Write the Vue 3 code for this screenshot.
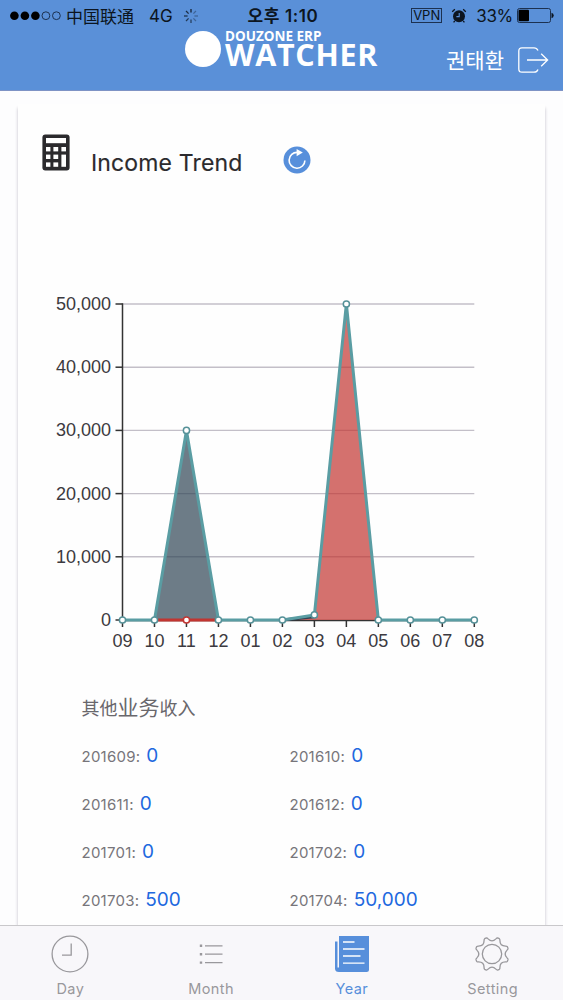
<template>
  <div class="page">
    <header class="header">
      <div class="status">
        <div class="status-left">
          <svg class="signal" width="51" height="12" viewBox="0 0 51 12">
            <circle
              v-for="n in 5"
              :key="n"
              :cx="4.4 + (n - 1) * 10.5"
              cy="5.7"
              :r="n <= 3 ? 4.3 : 3.9"
              :class="n <= 3 ? 'dot' : 'dot-empty'"
            />
          </svg>
          <span class="carrier">中国联通</span>
          <span class="network">4G</span>
          <svg class="loader" width="16" height="16" viewBox="-8 -8 16 16">
            <line
              v-for="n in 8"
              :key="n"
              x1="0"
              y1="-3.4"
              x2="0"
              y2="-7"
              :transform="`rotate(${n * 45})`"
              :opacity="n < 4 ? 0.35 : 0.4 + n * 0.06"
            />
          </svg>
        </div>
        <span class="time">오후 1:10</span>
        <div class="status-right">
          <span class="vpn">VPN</span>
          <svg class="alarm" width="16" height="16" viewBox="0 0 16 16">
            <circle cx="8" cy="8.2" r="6" fill="#0c1520" />
            <path d="M1.4 4Q2 2.200 4 1.400M14.600 4Q14 2.200 12 1.400M3.800 12.800l-1.200 1.600M12.200 12.800l1.200 1.600" stroke="#0c1520" stroke-width="1.300" fill="none" />
            <path d="M8.200 5v3.600H5.400" stroke="#5a90d8" stroke-width="1.100" fill="none" />
          </svg>
          <span class="percent">33%</span>
          <svg class="battery" width="37" height="15" viewBox="0 0 37 15">
            <rect x="0.5" y="0.5" width="33" height="14" rx="2" fill="none" stroke="#1c3150" />
            <rect x="1.5" y="1.8" width="10.5" height="11.4" rx="1" fill="#000" />
            <path d="M34.5 4.8q2.2.6 2.2 2.700t-2.200 2.700z" fill="#0c1520" />
          </svg>
        </div>
      </div>
      <div class="nav">
        <div class="logo">
          <span class="logo-mark"></span>
          <div class="logo-text">
            <span class="logo-small">DOUZONE ERP</span>
            <span class="logo-big">WATCHER</span>
          </div>
        </div>
        <div class="user">
          <span class="user-name">권태환</span>
          <svg width="31" height="26" viewBox="0 0 31 26" class="logout">
            <path d="M20 3.600Q18.800.8 16 .8H4Q.8.8.8 4v18Q.8 25.200 4 25.200h12q2.800 0 4-2.800" />
            <path d="M9 13h20.500M23.200 6.800L29.600 13l-6.400 6.200" />
          </svg>
        </div>
      </div>
    </header>

    <main class="content">
      <section class="card">
        <div class="title">
          <svg class="calc" width="28" height="37" viewBox="0 0 28 37">
            <rect x="0.400" y="0.500" width="27.200" height="36" rx="3" fill="#2b2a2d" />
            <g fill="#fff">
              <rect x="4" y="4" width="20" height="5.200" />
              <rect x="4" y="13" width="4.400" height="4.400" />
              <rect x="11.400" y="13" width="4.800" height="4.400" />
              <rect x="19.400" y="13" width="4.600" height="4.400" />
              <rect x="4" y="20.600" width="4.400" height="4.400" />
              <rect x="11.400" y="20.600" width="4.800" height="4.400" />
              <rect x="4" y="28.400" width="4.400" height="4.400" />
              <rect x="11.400" y="28.400" width="4.800" height="4.400" />
              <rect x="19.400" y="20.600" width="4.600" height="12.200" />
            </g>
          </svg>
          <h2>Income Trend</h2>
          <svg class="refresh" width="28" height="28" viewBox="0 0 28 28">
            <circle cx="14" cy="14" r="13.500" fill="#578fdb" />
            <path d="M14.500 6.400A7.900 7.900 0 1 0 21.900 14.400" fill="none" stroke="#fff" stroke-width="1.600" />
            <path d="M13.600 3l6.200 3.500-6.200 3.700z" fill="#fff" />
          </svg>
        </div>

        <svg class="chart" width="527" height="380" viewBox="18 280 527 380">
          <g v-for="tick in yTicks" :key="tick">
            <line v-if="tick > 0" class="grid-line" :x1="left" :x2="right" :y1="y(tick)" :y2="y(tick)" />
            <line class="axis" :x1="left - 7" :x2="left" :y1="y(tick)" :y2="y(tick)" />
            <text class="label" :x="left - 11.500" :y="y(tick) + 6" text-anchor="end">{{ tick.toLocaleString("en-US") }}</text>
          </g>
          <line class="axis" :x1="left" :x2="left" :y1="y(50000) - 0.700" :y2="y(0)" />
          <line class="axis" :x1="left" :x2="right" :y1="y(0) + 0.400" :y2="y(0) + 0.400" />
          <g v-for="(month, index) in months" :key="month">
            <line class="axis" :x1="x(index)" :x2="x(index)" :y1="y(0)" :y2="y(0) + 7" />
            <text class="label" :x="x(index)" :y="y(0) + 27" text-anchor="middle">{{ month }}</text>
          </g>

          <polygon :points="area(red)" fill="#c23531" opacity="0.700" />
          <polygon :points="between(dark, red)" fill="#2f4554" opacity="0.700" />
          <line :x1="x(5)" :y1="y(0)" :x2="x(6)" :y2="y(500)" class="line" stroke="#2f4554" />
          <polyline :points="line(dark)" class="line" stroke="#5a9da3" />
          <line :x1="x(1)" :x2="x(3)" :y1="y(0)" :y2="y(0)" class="line" stroke="#c23531" />
          <circle :cx="x(2)" :cy="y(0)" r="3.100" class="point" stroke="#c23531" />
          <circle
            v-for="(value, index) in dark"
            :key="index"
            :cx="x(index)"
            :cy="y(value)"
            r="3.100"
            class="point"
            stroke="#569198"
          />
        </svg>

        <div class="income">
          <h3>其他<span>业务</span>收入</h3>
          <ul>
            <li v-for="item in items" :key="item.month">
              <span class="month">{{ item.month }}:</span>
              <span class="value">{{ item.value }}</span>
            </li>
          </ul>
        </div>
      </section>
    </main>

    <nav class="tabs">
      <a v-for="tab in tabs" :key="tab" class="tab" :class="{ active: tab === activeTab }" @click="activeTab = tab">
        <svg width="38" height="38" viewBox="-19 -19 38 38">
          <g v-if="tab === 'Day'">
            <circle r="17.900" />
            <path d="M1.200-10.500V1.200H-8" />
          </g>
          <g v-else-if="tab === 'Month'">
            <path d="M-6-8.200H11.500M-6 .2H11.500M-6 8.600H11.500" />
            <path d="M-11.200-8.200h2.400M-11.200 .2h2.400M-11.200 8.600h2.400" stroke-width="2.400" />
          </g>
          <g v-else-if="tab === 'Year'">
            <path class="solid" d="M-13-18H17V15.500Q17 18 14.500 18H-13Q-17 18-17 14.500V-12.500H-14.500V13.500H-13z" />
            <path class="rows" d="M-9-12H2.500M-9-5H12.500M-9 2H8.500M-9 9.200H12.500" />
          </g>
          <g v-else transform="translate(-1 0)">
            <path :d="gear" />
            <circle r="9.700" />
          </g>
        </svg>
        <span>{{ tab }}</span>
      </a>
    </nav>
  </div>
</template>

<script setup>
import { ref } from "vue";

const tabs = ["Day", "Month", "Year", "Setting"];
const activeTab = ref("Year");

const months = ["09", "10", "11", "12", "01", "02", "03", "04", "05", "06", "07", "08"];
const yTicks = [0, 10000, 20000, 30000, 40000, 50000];
const red = [0, 0, 0, 0, 0, 0, 500, 50000, 0, 0, 0, 0];
const dark = [0, 0, 30000, 0, 0, 0, 800, 50000, 0, 0, 0, 0];

const items = [
  { month: "201609", value: "0" },
  { month: "201610", value: "0" },
  { month: "201611", value: "0" },
  { month: "201612", value: "0" },
  { month: "201701", value: "0" },
  { month: "201702", value: "0" },
  { month: "201703", value: "500" },
  { month: "201704", value: "50,000" },
];

const left = 122.5;
const right = 474.3;
const x = (index) => left + (index * (right - left)) / 11;
const y = (value) => 620 - (value / 50000) * 316;

const line = (values) => values.map((value, index) => `${x(index)},${y(value)}`).join(" ");
const area = (values) => `${left},${y(0)} ${line(values)} ${right},${y(0)}`;
const between = (top, bottom) => {
  const back = bottom.map((value, index) => `${x(index)},${y(value)}`).reverse();
  return `${line(top)} ${back.join(" ")}`;
};

// eight teeth with hollow curves between them
const polar = (r, deg) => {
  const a = (deg * Math.PI) / 180;
  return `${(r * Math.cos(a)).toFixed(2)} ${(r * Math.sin(a)).toFixed(2)}`;
};
const gear =
  [0, 1, 2, 3, 4, 5, 6, 7]
    .map((i) => {
      const t = 22.5 + i * 45;
      return `${i ? "L" : "M"}${polar(15.6, t - 8)}Q${polar(16.8, t - 6)} ${polar(17, t - 3)}L${polar(17, t + 3)}Q${polar(16.8, t + 6)} ${polar(15.6, t + 8)}Q${polar(11.2, t + 22.5)} ${polar(15.6, t + 37)}`;
    })
    .join("") + "Z";
</script>

<style>
body {
  margin: 0;
}
</style>

<style scoped>
.page {
  display: flex;
  flex-direction: column;
  width: 563px;
  height: 1000px;
  overflow: hidden;
  background: #fdfdfe;
  font-family: Inter, "Noto Sans CJK SC", sans-serif;
}
.header {
  flex: none;
  box-sizing: border-box;
  height: 91px;
  background: #5a90d8;
  border-bottom: 1px solid #7e93c5;
}
.status {
  display: grid;
  grid-template-columns: 1fr auto 1fr;
  align-items: center;
  height: 31px;
  padding: 0 9px 0 10px;
  color: #0c1520;
  font-size: 17px;
}
.status-left,
.status-right {
  display: flex;
  align-items: center;
}
.status-right {
  justify-content: flex-end;
}
.dot {
  fill: #000;
}
.dot-empty {
  fill: none;
  stroke: #1c3150;
}
.carrier {
  margin-left: 5px;
  font-family: "Noto Sans CJK SC", sans-serif;
  line-height: 20px;
}
.network {
  margin: 0 10px 0 15px;
  font-size: 17px;
}
.loader line {
  stroke: #0c1520;
  stroke-width: 1.3;
}
.time {
  padding-left: 2px;
  font-family: Inter, "Noto Sans CJK KR", sans-serif;
  font-weight: 600;
  line-height: 20px;
  letter-spacing: 0.6px;
}
.vpn {
  border: 1px solid #1c3150;
  padding: 0 1px;
  font-size: 13px;
  line-height: 13px;
}
.alarm {
  margin: 0 9px;
}
.percent {
  margin-right: 4px;
  letter-spacing: -0.3px;
}
.nav {
  display: flex;
  justify-content: space-between;
  height: 59px;
  padding: 0 14px 0 185px;
  color: #fff;
}
.logo {
  display: flex;
}
.logo-mark {
  width: 36px;
  height: 36px;
  margin-right: 4px;
  border-radius: 50%;
  background: #fff;
}
.logo-text {
  display: flex;
  flex-direction: column;
  font-family: "Open Sans", sans-serif;
  font-weight: 700;
}
.logo-small {
  height: 11px;
  font-size: 13.5px;
  line-height: 10px;
}
.logo-big {
  font-size: 30.5px;
  line-height: 25px;
  letter-spacing: 0.7px;
}
.user {
  display: flex;
  align-items: center;
  gap: 14px;
}
.user-name {
  margin-top: -4px;
  font-family: "Noto Sans CJK KR", sans-serif;
  font-size: 21px;
  line-height: 28px;
}
.logout {
  margin-top: -2px;
  fill: none;
  stroke: #fff;
  stroke-width: 1.3;
}
.content {
  flex: 1;
  min-height: 0;
  padding: 13px 18px 0;
  overflow: hidden;
}
.card {
  height: 900px;
  background: #fefefe;
  box-shadow: 0 4px 3px rgba(60, 50, 80, 0.3);
}
.title {
  display: flex;
  align-items: center;
  height: 60px;
  padding: 24px 24px 0;
}
.title h2 {
  margin: 10px 0 0 21px;
  width: 192px;
  color: #2b2a2d;
  font-size: 23px;
  font-weight: 400;
  line-height: 30px;
  letter-spacing: 0.15px;
  -webkit-text-stroke: 0.15px #2b2a2d;
}
.calc {
  margin-bottom: 11px;
}
.refresh {
  margin-top: 3px;
}
.chart {
  display: block;
  margin-top: 92px;
}
.grid-line {
  stroke: #c3bfc8;
  stroke-width: 1.4;
}
.axis {
  stroke: #333;
  stroke-width: 1.5;
}
.label {
  fill: #3c3a40;
  font-family: "Liberation Sans", Arial, sans-serif;
  font-size: 18px;
}
.line {
  fill: none;
  stroke-width: 3;
  stroke-linejoin: bevel;
}
.point {
  fill: #fff;
  stroke-width: 1.5;
}
.income {
  padding: 31px 0 0 63.5px;
}
.income h3 {
  margin: 0;
  color: #69676c;
  font-family: "Noto Sans CJK SC", sans-serif;
  font-size: 18px;
  font-weight: 400;
  line-height: 30px;
}
.income h3 span {
  font-size: 21px;
}
.income ul {
  display: grid;
  grid-template-columns: 208px 1fr;
  grid-auto-rows: 48px;
  margin: 10px 0 0;
  padding: 0;
  list-style: none;
}
.income li {
  display: flex;
  align-items: baseline;
  gap: 6px;
  line-height: 48px;
}
.month {
  color: #77757a;
  font-size: 15px;
  letter-spacing: 0.25px;
}
.value {
  color: #2168df;
  font-size: 19px;
}
.tabs {
  display: grid;
  grid-template-columns: repeat(4, 1fr);
  flex: none;
  box-sizing: border-box;
  height: 75px;
  border-top: 1px solid #c9c8cb;
  background: #f8f7fa;
}
.tab {
  display: flex;
  flex-direction: column;
  align-items: center;
  padding-top: 9px;
  color: #99989c;
  font-size: 14.5px;
  line-height: 18px;
  letter-spacing: 0.4px;
}
.tab svg {
  margin-bottom: 7px;
  fill: none;
  stroke: currentColor;
  stroke-width: 1.3;
}
.tab.active {
  color: #578fdb;
}
.tab .solid {
  fill: currentColor;
  stroke: none;
}
.tab .rows {
  stroke: #fff;
}
</style>
